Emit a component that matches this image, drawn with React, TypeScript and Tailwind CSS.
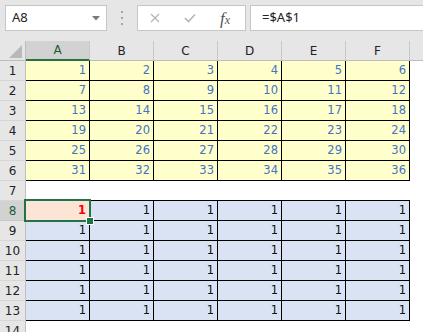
const cols = ['A', 'B', 'C', 'D', 'E', 'F'];

function RowHeader({ n, selected }: { n: number; selected?: boolean }) {
  return (
    <div
      className={
        'w-[26px] h-[20px] shrink-0 flex items-center justify-center border-r border-b text-[12px] ' +
        (selected
          ? 'bg-[#d2d2d2] border-r-[#217346] border-b-[#c8c8c8] text-[#1e5c38]'
          : 'bg-[#e6e6e6] border-r-[#bdbdbd] border-b-[#d6d6d6] text-[#222]')
      }
    >
      {n}
    </div>
  );
}

function Cell({ value, kind }: { value: number; kind: 'yellow' | 'blue' | 'active' }) {
  const bg =
    kind === 'yellow'
      ? 'bg-[#ffffcc] text-[#4472c4]'
      : kind === 'blue'
      ? 'bg-[#dae3f3] text-[#111]'
      : 'bg-[#fce4d6] text-[#ff0000] font-bold';
  return (
    <div
      className={
        'w-[64px] h-[20px] shrink-0 flex items-center justify-end pr-[3px] border-r border-b border-black text-[11.5px] ' +
        bg
      }
    >
      {value}
    </div>
  );
}

function Toolbar() {
  return (
    <div className="h-[41px] flex items-start pt-[5px] font-['Noto_Sans',sans-serif]">
      <div className="ml-[5px] w-[102px] h-[26px] bg-white border border-[#c6c6c6] flex items-center justify-between pl-[6px] pr-[6px] text-[13px] text-[#222]">
        <span>A8</span>
        <svg width="8" height="5" viewBox="0 0 8 5">
          <path d="M0 0 L8 0 L4 4.5 Z" fill="#7a7a7a" />
        </svg>
      </div>
      <div className="w-[30px] h-[26px] flex flex-col items-center justify-center gap-[4px]">
        <div className="w-[2px] h-[2px] bg-[#a6a6a6]" />
        <div className="w-[2px] h-[2px] bg-[#a6a6a6]" />
        <div className="w-[2px] h-[2px] bg-[#a6a6a6]" />
      </div>
      <div className="w-[109px] h-[26px] bg-white border border-[#c6c6c6] flex items-center">
        <svg className="ml-[12px]" width="10" height="10" viewBox="0 0 10 10">
          <path d="M1 1 L9 9 M9 1 L1 9" stroke="#b5b5b5" strokeWidth="1.3" />
        </svg>
        <svg className="ml-[24px]" width="12" height="10" viewBox="0 0 12 10">
          <path d="M1 5 L4.5 8.5 L11 1.5" stroke="#b5b5b5" strokeWidth="1.6" fill="none" />
        </svg>
        <span className="ml-[24px] font-['Liberation_Serif',serif] italic text-[17px] text-[#555] leading-none">
          f<span className="text-[12px]">x</span>
        </span>
      </div>
      <div className="ml-[4px] flex-1 h-[26px] bg-white border border-r-0 border-[#c6c6c6] flex items-center pl-[11px] text-[13px] text-[#222]">
        =$A$1
      </div>
    </div>
  );
}

export default function App() {
  const yellowRows = [1, 2, 3, 4, 5, 6];
  const blueRows = [8, 9, 10, 11, 12, 13];
  return (
    <div className="w-[423px] h-[332px] overflow-hidden bg-[#e6e6e6] relative font-['DejaVu_Sans',sans-serif]">
      <Toolbar />
      {/* column headers */}
      <div className="flex h-[20px]">
        <div className="w-[26px] h-[20px] shrink-0 border-r border-b border-[#bdbdbd] flex items-end justify-end pr-[3px] pb-[2px]">
          <svg width="13" height="13" viewBox="0 0 13 13">
            <path d="M13 0 L13 13 L0 13 Z" fill="#b9b9b9" />
          </svg>
        </div>
        {cols.map((c) => (
          <div
            key={c}
            className={
              'w-[64px] h-[20px] shrink-0 flex items-center justify-center border-r border-[#c8c8c8] text-[12px] ' +
              (c === 'A'
                ? 'bg-[#d2d2d2] border-b-2 border-b-[#217346] text-[#1e5c38]'
                : 'border-b border-b-[#bdbdbd] text-[#222]')
            }
          >
            {c}
          </div>
        ))}
        <div className="flex-1 border-b border-[#bdbdbd]" />
      </div>
      {yellowRows.map((r) => (
        <div key={r} className="flex h-[20px]">
          <RowHeader n={r} />
          {cols.map((c, i) => (
            <Cell key={c} value={(r - 1) * 6 + i + 1} kind="yellow" />
          ))}
          <div className="flex-1 bg-white" />
        </div>
      ))}
      <div className="flex h-[20px]">
        <RowHeader n={7} />
        <div className="w-[384px] h-[20px] shrink-0 bg-white border-b border-black" />
        <div className="flex-1 bg-white" />
      </div>
      {blueRows.map((r) => (
        <div key={r} className="flex h-[20px]">
          <RowHeader n={r} selected={r === 8} />
          {cols.map((c, i) => (
            <Cell key={c} value={1} kind={r === 8 && i === 0 ? 'active' : 'blue'} />
          ))}
          <div className="flex-1 bg-white" />
        </div>
      ))}
      <div className="flex h-[20px]">
        <RowHeader n={14} />
        <div className="flex-1 bg-white" />
      </div>
      {/* active cell outline and fill handle */}
      <div className="absolute left-[24px] top-[199px] w-[67px] h-[23px] border-2 border-[#217346]" />
      <div className="absolute left-[87px] top-[218px] w-[6px] h-[6px] bg-[#217346] outline outline-1 outline-white" />
    </div>
  );
}
